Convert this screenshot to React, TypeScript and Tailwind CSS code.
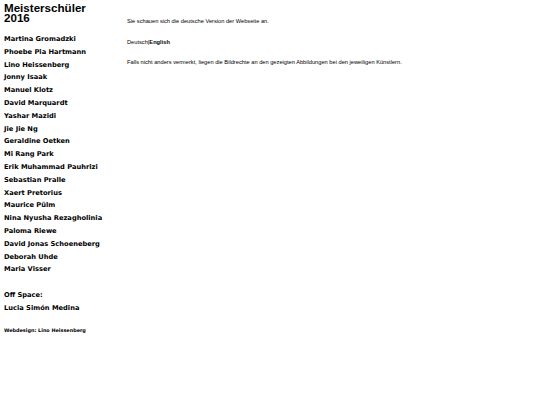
const names = [
  "Martina Gromadzki",
  "Phoebe Pia Hartmann",
  "Lino Heissenberg",
  "Jonny Isaak",
  "Manuel Klotz",
  "David Marquardt",
  "Yashar Mazidi",
  "Jie Jie Ng",
  "Geraldine Oetken",
  "Mi Rang Park",
  "Erik Muhammad Pauhrizi",
  "Sebastian Pralle",
  "Xaert Pretorius",
  "Maurice Pülm",
  "Nina Nyusha Rezagholinia",
  "Paloma Riewe",
  "David Jonas Schoeneberg",
  "Deborah Uhde",
  "Maria Visser",
];

export default function App() {
  return (
    <div className="flex w-[540px] h-[405px] bg-white text-black">
      {/* Navigation */}
      <div className="w-[123px] shrink-0 pl-[4px] pt-[2px]">
        <h1 className="font-['Liberation_Sans',Arial,sans-serif] font-bold text-[11.6px] leading-[9.5px] pt-[1px]">
          Meisterschüler
          <br />
          2016
        </h1>
        <ul className="mt-[11px] font-['DejaVu_Sans',Verdana,sans-serif] font-bold text-[6.7px] leading-[12.8px]">
          {names.map((n) => (
            <li key={n}>{n}</li>
          ))}
          <li className="mt-[12.8px]">Off Space:</li>
          <li>Lucia Simón Medina</li>
        </ul>
        <p className="mt-[12px] font-['DejaVu_Sans',Verdana,sans-serif] font-bold text-[4.9px]">
          Webdesign: Lino Heissenberg
        </p>
      </div>

      {/* Content */}
      <div className="pl-[4px] pt-[18px] font-['Liberation_Sans',Arial,sans-serif] text-[5.7px] leading-[7px]">
        <p>Sie schauen sich die deutsche Version der Webseite an.</p>
        <p className="mt-[14px]">
          Deutsch|<span className="font-bold">English</span>
        </p>
        <p className="mt-[13px]">
          Falls nicht anders vermerkt, liegen die Bildrechte an den gezeigten Abbildungen bei den jeweiligen Künstlern.
        </p>
      </div>
    </div>
  );
}
